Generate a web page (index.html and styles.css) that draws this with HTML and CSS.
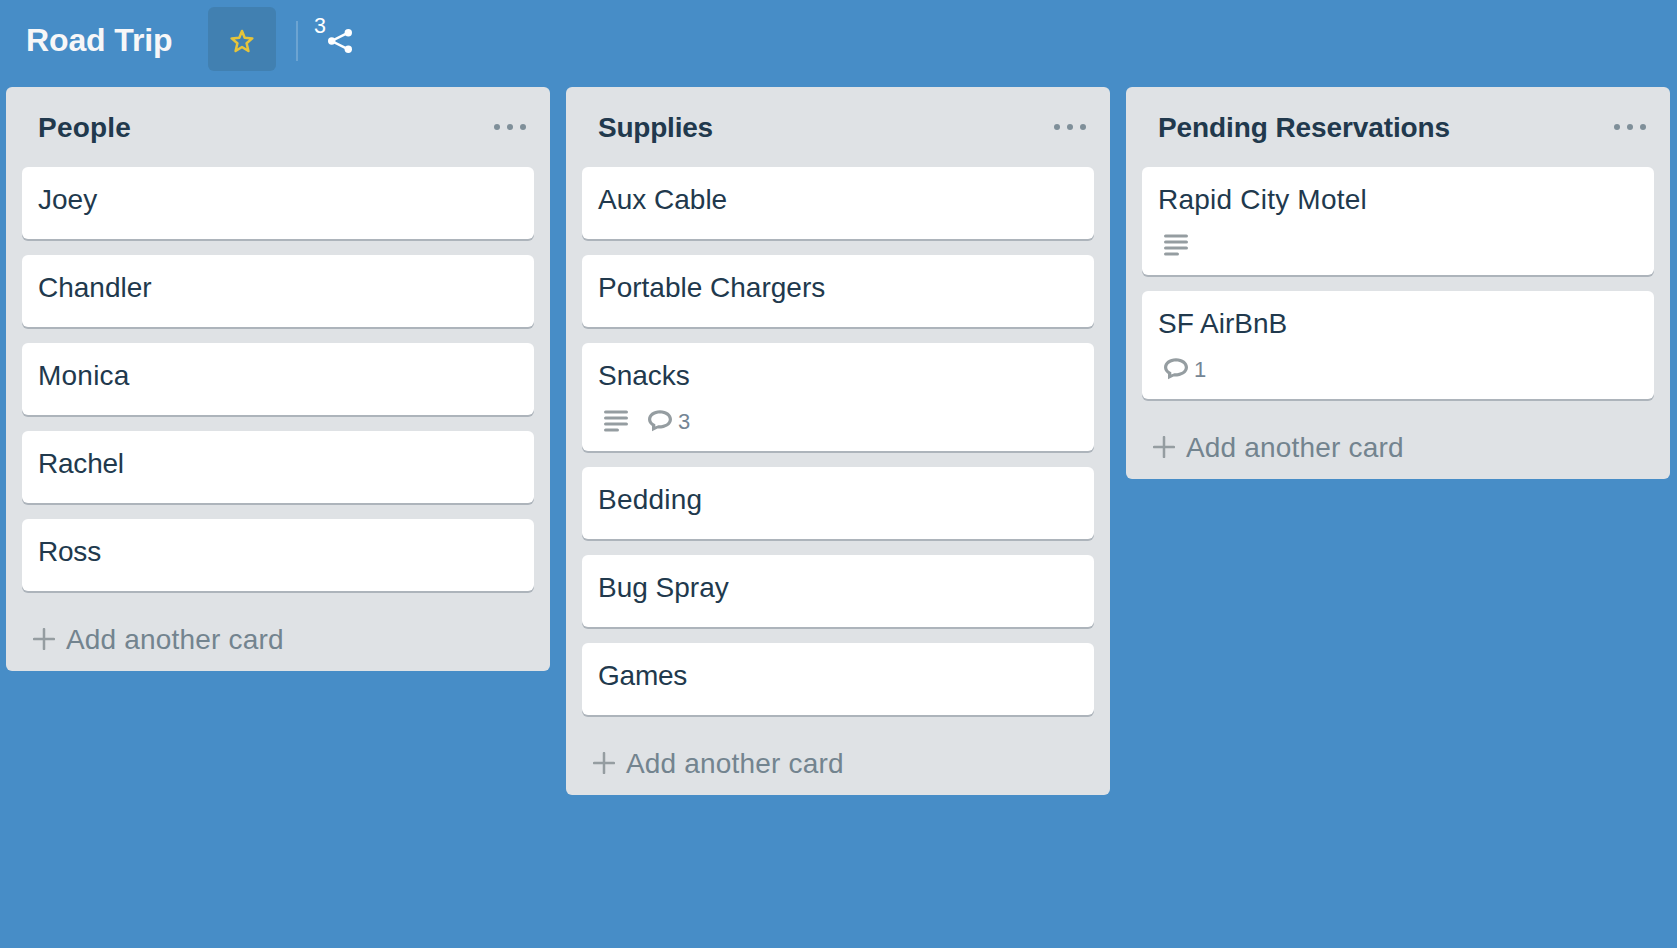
FILE: index.html
```html
<!DOCTYPE html>
<html lang="en">
<head>
<meta charset="utf-8">
<title>Road Trip</title>
<link rel="stylesheet" href="styles.css">
</head>
<body>
<svg class="sprite" aria-hidden="true">
  <symbol id="dots" viewBox="0 0 32 6"><circle cx="3" cy="3" r="3"/><circle cx="16" cy="3" r="3"/><circle cx="29" cy="3" r="3"/></symbol>
  <symbol id="desc" viewBox="0 0 24 22"><path d="M1.600 2h20.800M1.600 8h20.800M1.600 14h20.800M1.600 20h11.800" fill="none" stroke="currentColor" stroke-width="3.200" stroke-linecap="round"/></symbol>
  <symbol id="comment" viewBox="0 0 24 22"><path fill-rule="evenodd" d="M12 .2C5.200 .2 0 4 0 9.300C0 12 1.500 14.400 4 16V21.200L9.500 18.600C17.500 18.900 24 15.200 24 9.300C24 4 18.800 .2 12 .2ZM12 3.400C17 3.400 20.800 6 20.800 9.300C20.800 13.200 16.500 15.500 10.400 15.300L7.300 16.400V14.300C4.700 13.200 3.200 11.400 3.200 9.300C3.200 6 7 3.400 12 3.400Z"/></symbol>
  <symbol id="plus" viewBox="0 0 22 22"><path d="M11 1.100v19.800M1.100 11h19.800" fill="none" stroke="currentColor" stroke-width="2.500" stroke-linecap="round"/></symbol>
</svg>
<header class="board-header">
  <h1 class="board-name">Road Trip</h1>
  <button class="star-button" aria-label="Star">
    <svg class="star" viewBox="0 0 24 24"><path d="M12 2L14.700 8.800L22.300 9.400L16.600 14.200L18.400 22L12 18L5.600 22L7.400 14.200L1.700 9.400L9.300 8.800Z" fill="none" stroke="currentColor" stroke-width="2.500" stroke-linejoin="round"/></svg>
  </button>
  <span class="divider"></span>
  <div class="share">
    <span class="share-count">3</span>
    <svg class="share-icon" viewBox="0 0 24 24"><path d="M20.300 3.700L3.700 12L20.300 20.300" fill="none" stroke="currentColor" stroke-width="2.500"/><circle cx="3.700" cy="12" r="3.700"/><circle cx="20.300" cy="3.700" r="3.700"/><circle cx="20.300" cy="20.300" r="3.700"/></svg>
  </div>
</header>
<main class="board">
  <section class="list">
    <div class="list-header"><h2 class="list-title loose">People</h2><svg class="dots"><use href="#dots"/></svg></div>
    <div class="cards">
      <article class="card"><span class="card-title">Joey</span></article>
      <article class="card"><span class="card-title">Chandler</span></article>
      <article class="card"><span class="card-title loose">Monica</span></article>
      <article class="card"><span class="card-title tight">Rachel</span></article>
      <article class="card"><span class="card-title tight">Ross</span></article>
    </div>
    <div class="add"><svg class="plus"><use href="#plus"/></svg><span class="add-label">Add another card</span></div>
  </section>
  <section class="list">
    <div class="list-header"><h2 class="list-title tight">Supplies</h2><svg class="dots"><use href="#dots"/></svg></div>
    <div class="cards">
      <article class="card"><span class="card-title">Aux Cable</span></article>
      <article class="card"><span class="card-title">Portable Chargers</span></article>
      <article class="card"><span class="card-title">Snacks</span>
        <div class="badges"><svg class="badge-icon"><use href="#desc"/></svg><div class="badge"><svg class="badge-icon"><use href="#comment"/></svg><span class="badge-count">3</span></div></div>
      </article>
      <article class="card"><span class="card-title loose">Bedding</span></article>
      <article class="card"><span class="card-title">Bug Spray</span></article>
      <article class="card"><span class="card-title tight">Games</span></article>
    </div>
    <div class="add"><svg class="plus"><use href="#plus"/></svg><span class="add-label">Add another card</span></div>
  </section>
  <section class="list">
    <div class="list-header"><h2 class="list-title">Pending Reservations</h2><svg class="dots"><use href="#dots"/></svg></div>
    <div class="cards">
      <article class="card"><span class="card-title loose">Rapid City Motel</span>
        <div class="badges"><svg class="badge-icon"><use href="#desc"/></svg></div>
      </article>
      <article class="card"><span class="card-title">SF AirBnB</span>
        <div class="badges"><div class="badge"><svg class="badge-icon"><use href="#comment"/></svg><span class="badge-count">1</span></div></div>
      </article>
    </div>
    <div class="add"><svg class="plus"><use href="#plus"/></svg><span class="add-label">Add another card</span></div>
  </section>
</main>
</body>
</html>
```
FILE: styles.css
```css
* { box-sizing: border-box; }
body {
  margin: 0;
  height: 948px;
  overflow: hidden;
  background: #478dc7;
  color: #21394d;
  font-family: "Liberation Sans", Arial, sans-serif;
  font-size: 28px;
}
svg { display: block; flex: none; fill: currentColor; }
.sprite { position: absolute; width: 0; height: 0; }
.board-header {
  display: flex;
  align-items: flex-start;
  height: 87px;
  padding: 7px 0 0 26px;
  color: #fff;
}
.board-name {
  width: 182px;
  margin: 13px 0 0;
  font-size: 32px;
  line-height: 40px;
  letter-spacing: -0.12px;
  color: #f7f7f8;
  white-space: nowrap;
}
.star-button {
  display: flex;
  align-items: center;
  justify-content: center;
  width: 68px;
  height: 64px;
  padding: 4px 0 0;
  border: 0;
  border-radius: 6px;
  background: #4180b1;
  color: #e6c43a;
}
.star { width: 24px; height: 24px; }
.divider { width: 2px; height: 40px; margin: 14px 16px 0 20px; background: #6ca4d2; }
.share { display: flex; align-items: flex-start; }
.share-count { width: 14px; margin-top: 7px; font-size: 21.5px; line-height: 24px; }
.share-icon { width: 24px; height: 24px; margin-top: 22px; }
.board { display: flex; align-items: flex-start; gap: 16px; padding-left: 6px; }
.list {
  flex: none;
  width: 544px;
  padding: 0 16px;
  border-radius: 6px;
  background: #dfe2e5;
}
.list-header {
  display: flex;
  align-items: center;
  justify-content: space-between;
  height: 80px;
  padding: 0 8px 0 16px;
}
.list-title { margin: 2px 0 0; font-size: 28px; line-height: 36px; letter-spacing: -0.1px; }
.dots { width: 32px; height: 6px; color: #7f8f99; }
.cards { display: flex; flex-direction: column; gap: 16px; }
.card {
  min-height: 72px;
  padding: 15px 16px 0;
  border-radius: 6px;
  background: #fff;
  box-shadow: 0 2px 0 #adb4bb;
}
.card-title { display: block; line-height: 36px; white-space: nowrap; }
.loose { letter-spacing: 0.22px; }
.tight { letter-spacing: -0.22px; }
.badges {
  display: flex;
  gap: 20px;
  height: 57px;
  padding: 16px 0 0 6px;
  color: #959da1;
}
.badge { display: flex; }
.badge-icon { width: 24px; height: 22px; }
.badge-count { margin-left: 6px; font-size: 22px; line-height: 24px; color: #748594; }
.add {
  display: flex;
  align-items: center;
  height: 80px;
  padding: 16px 0 0 11px;
  color: #959da1;
}
.plus { width: 22px; height: 22px; }
.add-label { margin: 1px 0 0 11px; line-height: 36px; color: #73848f; letter-spacing: 0.18px; }
```
